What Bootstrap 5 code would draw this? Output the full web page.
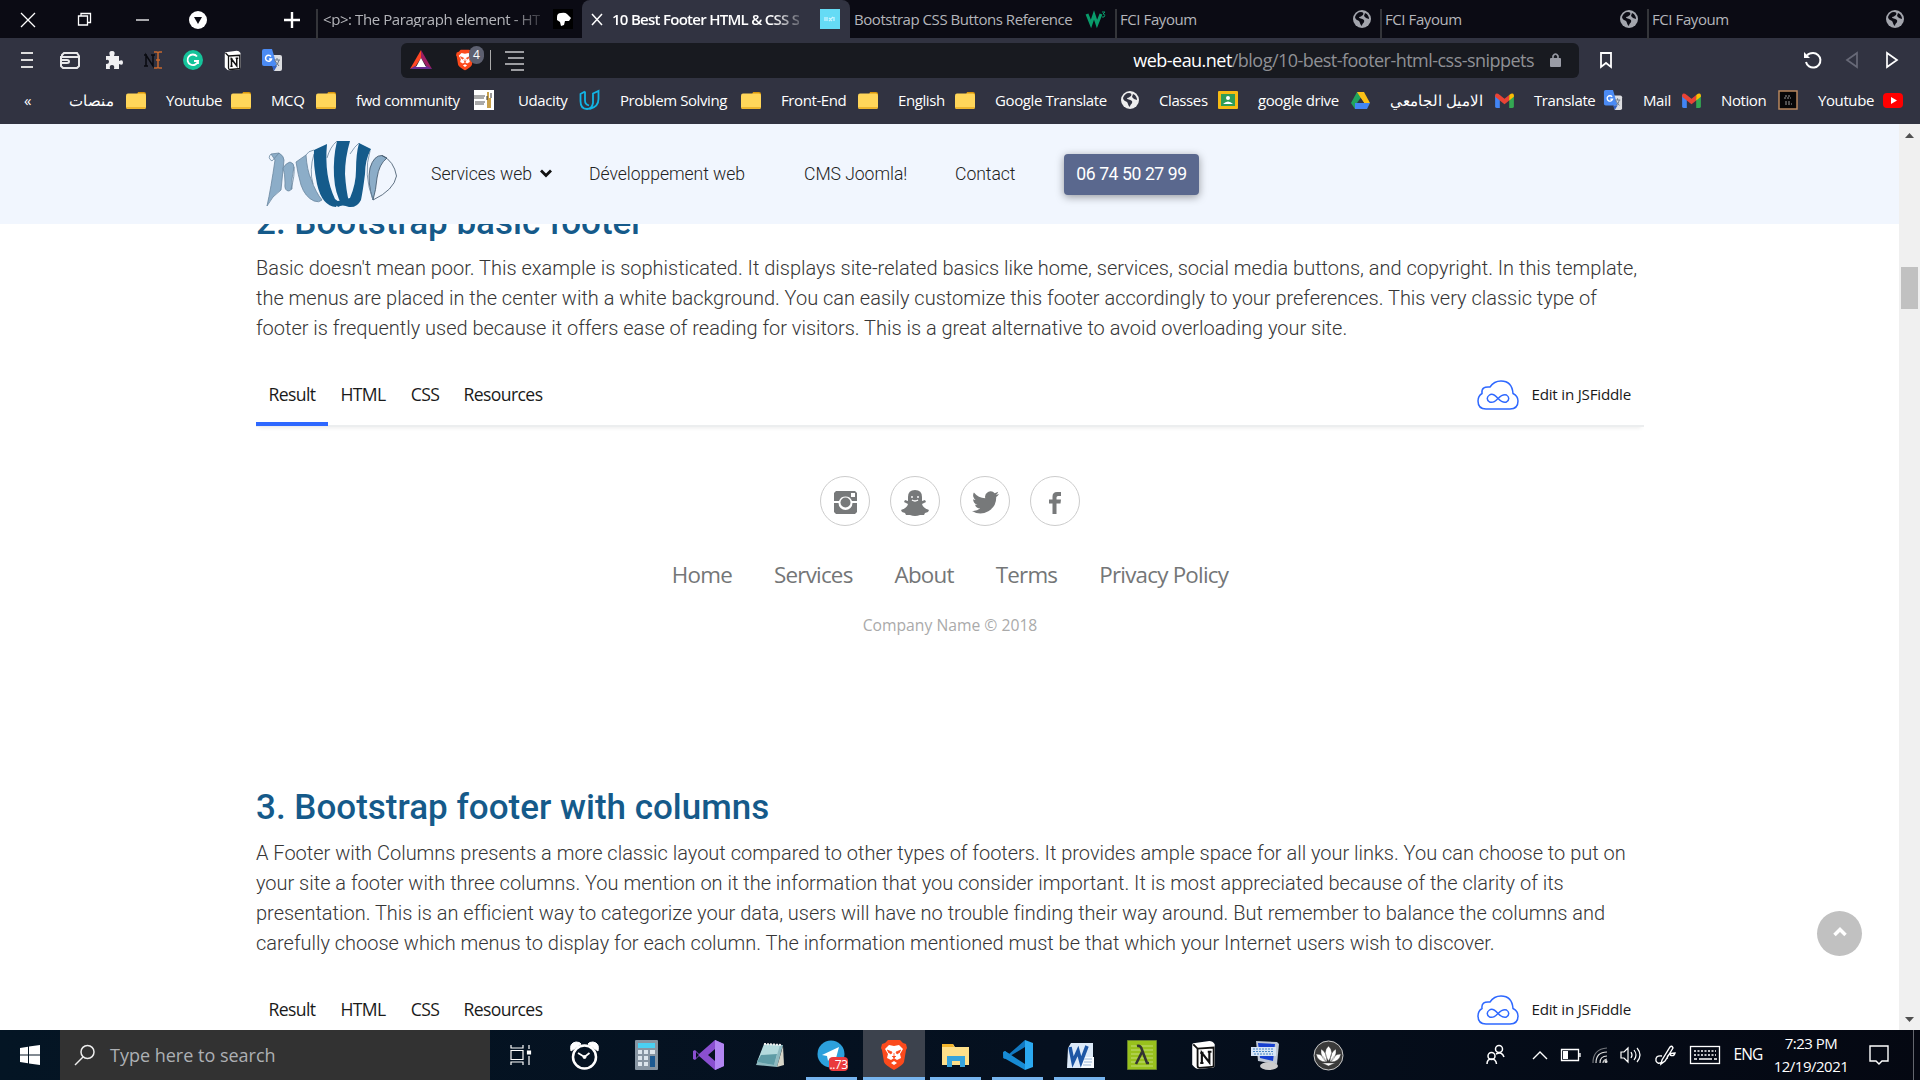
<!DOCTYPE html>
<html lang="en">
<head>
<meta charset="utf-8">
<title>10 Best Footer HTML &amp; CSS Snippets</title>
<link href="https://cdn.jsdelivr.net/npm/bootstrap@5.3.0/dist/css/bootstrap.min.css" rel="stylesheet">
<style>
body{width:1920px;height:1080px;overflow:hidden;font-family:"Open Sans","Noto Sans",sans-serif;background:#fff;line-height:1}
svg{display:block;flex:none;overflow:visible}
.ui{white-space:nowrap}
/* browser chrome */
.tabstrip{height:38px;background:#0b0b14;display:grid;grid-template-columns:56px 56px 60px 52px 92px 266px 268px 265px 265px 267px 1fr;color:#b4b5ba;font-size:15px;letter-spacing:-.42px}
.tabstrip>div{display:flex;align-items:center}
.tab-item{border-left:2px solid #34353a;margin-top:9px;padding:0 9px 10px 3px;justify-content:space-between}
.tab-item:nth-child(6){padding-left:5px}
.tab-live{background:#313341;border-radius:8px 8px 0 0;color:#fff;font-weight:600;padding:0 10px 1px 10px;letter-spacing:-.72px}
.tab-title{margin-left:10px}
.tabstrip>.no-edge{border-color:transparent;padding-left:2px;letter-spacing:-.45px}
.fade-text{-webkit-mask-image:linear-gradient(90deg,#000 86%,rgba(0,0,0,.25));mask-image:linear-gradient(90deg,#000 86%,rgba(0,0,0,.25))}
.tab-globe{--hole:#0b0b14;color:#a3a5ad}
.book-globe{--hole:#313341;color:#eee}
.toolrow{height:44px;background:#313341;display:grid;grid-template-columns:49px 41px 43px 40px 40px 40px 148px 1178px 54px 1fr 40px 40px 48px;align-items:center}
.toolrow>div{display:flex;justify-content:center}
.toolrow .omni{height:35px;background:#181a20;border-radius:6px;display:flex;align-items:center;justify-content:flex-start;padding:0 18px 0 9px;color:#fff;font-size:18px;letter-spacing:-.53px}
.omni .dim{color:#8f9095}
.omni-lock{margin-left:16px}
.shield-count{left:13px;top:-3px;width:15px;height:18px;border-radius:8px;background:#5d6070;color:#fff;font-size:12px;letter-spacing:0;display:flex;align-items:center;justify-content:center}
.bookrow{height:42px;background:#313341;color:#fff;font-size:15px;letter-spacing:-.4px;display:grid;grid-template-columns:69px 77px 105px 85px 158px 106px 161px 117px 97px 164px 99px 132px 144px 109px 78px 97px 105px 1fr;padding-bottom:6px}
.bookrow>a{color:inherit;text-decoration:none;display:flex;align-items:center;justify-content:space-between}
.bookrow>a:not(:first-child){padding-left:20px}
.bookrow>a:nth-child(2){padding-left:0}
.bookrow>a:nth-child(6){padding-left:24px}
/* site */
.viewport-box{height:906px;overflow:hidden}
.site{width:1899px;height:906px;overflow:hidden;font-family:Roboto,sans-serif}
.site-nav{height:100px;background:#f1f6fe;padding-left:266px;font-size:17.6px;letter-spacing:-.05px;font-weight:300;color:#222;display:grid;grid-template-columns:165px 158px 215px 151px 109px 135px;align-items:center}
.site-nav>span{padding-top:1px}
.call-btn{height:41px;background:#5a688e;color:#fff;border:0;border-radius:4px;font-size:17.6px;font-weight:400;letter-spacing:-.42px;box-shadow:0 2px 8px rgba(0,0,0,.38);padding:1px 0 0}
.article{width:1388px;margin-left:256px}
.article h2{font-size:35px;font-weight:500;color:#155a8a;line-height:42px;margin:0 0 9px}
.clip-head{height:29px;overflow:hidden;display:flex;align-items:flex-end}
.article p{font-size:20px;font-weight:300;line-height:30px;color:#363636;margin:0;white-space:nowrap;letter-spacing:-.01px}
.fiddle-bar{height:64px;margin-top:20px;font-family:"Open Sans",sans-serif;font-size:17.6px;letter-spacing:-.62px;color:#1a1a1a;border-bottom:2px solid #eceeef;box-shadow:0 4px 4px -3px rgba(0,0,0,.08);display:grid;grid-template-columns:72px 70px 54px 102px 1fr auto}
.fiddle-bar>div{display:flex;align-items:center;justify-content:center;padding-top:2px}
.fiddle-bar>.sel{border-bottom:4px solid #2e68ff;margin-bottom:-1px;padding-top:5px}
.fiddle-bar>.fiddle-edit{font-size:15.2px;padding-right:13px;letter-spacing:-.22px}
.demo-foot{height:360px;padding-top:49px}
.demo-soc{gap:20px;margin-bottom:38px}
.soc{width:50px;height:50px;border:1px solid #ccc;border-radius:50%;color:#77797a;padding-top:3px}
.foot-links{font-family:"Open Sans",sans-serif;font-size:22.4px;letter-spacing:-.78px;color:#747677;gap:42px;margin-bottom:32px}
.foot-copy{font-family:"Open Sans",sans-serif;font-size:15.7px;color:#aaa}
.sbar{width:21px;background:#f0f0f0}
.sbar-up{margin-top:9px}
.sthumb{width:17px;height:42px;background:#c1c1c1;margin-top:129px}
.to-top{left:1817px;top:787px;width:45px;height:45px;border-radius:50%;background:#c1c1c1}
/* taskbar */
.taskbar{height:50px;background:linear-gradient(90deg,#041524 0,#05101f 55%,#050812);color:#fff;display:grid;grid-template-columns:60px 431px repeat(14,62px) 1fr}
.taskbar>div{display:flex;align-items:center;justify-content:center}
.taskbar .find{background:#323232;color:#adb0b4;font-size:18px;justify-content:flex-start;padding-left:14px;gap:15px;margin-right:1px}
.taskbar .tview{padding-right:4px}
.taskbar .run{position:relative}
.run::after{content:"";position:absolute;left:5px;right:6px;bottom:0;height:3px;background:#76b4ee}
.taskbar .cur{background:#3c424d}
.taskbar .cur::after{left:0;right:0}
.taskbar .tray{display:grid;grid-template-columns:1fr 42px 20px 38px 22px 48px 32px 54px 72px 64px 9px;justify-items:center}
.tray .tray-people{justify-self:end;margin-right:15px}
.tray-peek{border-left:1px solid #63666e;height:50px;width:5px}
.eng{font-size:15.5px;letter-spacing:-.9px}
.clock{font-size:15px;letter-spacing:-.5px;line-height:23px;text-align:center;padding-bottom:1px}
</style>
</head>
<body>
<svg width="0" height="0" class="position-absolute">
<defs>
<symbol id="folder" viewBox="0 0 20 18"><path d="M12 1h6q2 0 2 2v3H10z" fill="#d9960a"/><rect y="2.5" width="20" height="15.5" rx="2" fill="#ffd65a"/><path d="M0 16h20q0 2-2 2H2q-2 0-2-2" fill="#eeb62e"/></symbol>
<symbol id="globe" viewBox="0 0 18 18"><circle cx="9" cy="9" r="9" fill="currentColor"/><path d="M8 2C10 2 11 3 10 5 8 6 8 7 6 7 6 9 9 8 11 10 12 13 9 13 9 16 7 15 7 12 6 11 4 10 2 9 2 7 3 4 5 2 8 2M12 3c3 1 4 4 4 6l-3-1-2-2z" fill="var(--hole)"/></symbol>
<symbol id="gmail" viewBox="0 0 20 16"><path d="M0 2v12q0 2 2 2h3V6z" fill="#4285f4"/><path d="M20 2v12q0 2-2 2h-3V6z" fill="#34a853"/><path d="M0 2Q1-1 5 2l5 4 5-4v6l-5 4-5-4-5-4z" fill="#ea4335"/><path d="M15 2q4-3 5 0v2l-5 4z" fill="#fbbc04"/></symbol>
<symbol id="gtrans" viewBox="0 0 20 22"><path d="M8 6h10q2 0 2 2v12q0 2-2 2h-6z" fill="#dcdde0"/><path d="M2 0h8l5 17H2q-2 0-2-2V2q0-2 2-2" fill="#4b8bf4"/><path d="M10 17h5l-3 5z" fill="#3160c4"/><path d="M9 7.500A3 3 0 1 0 9.500 10H7" fill="none" stroke="#fff" stroke-width="1.500"/><path d="M12 11h6M15 9v2M17 11q-1 5-4 6M13 12l4 5" stroke="#6b7785" fill="none"/></symbol>
<symbol id="notion" viewBox="0 0 24 28"><path d="M2 3 17 1q3 0 5 3v19q0 3-3 3L7 27Q4 27 1 23V6q0-3 1-3" fill="#fff"/><path d="m2 4 4 4 15-1v17q0 1-2 1L8 26q-2 0-2-2V8" fill="#fff" stroke="#111" stroke-width="1.700"/><path d="M10 21V12l7 9V11M8.500 12h3M8.500 21.500h3M15.500 11H19" fill="none" stroke="#111" stroke-width="2"/></symbol>
<symbol id="lion" viewBox="0 0 26 30"><path d="m7 0h12l3 3 3 1 1 4-1 2-2 12q-1 3-10 8Q4 25 3 22L1 10 0 8l1-4 3-1z" fill="#fb4a1c"/><path d="m13 6 5-1 4 4-3 5 1 4-4 2-3-2-3 2-4-2 1-4-3-5 4-4zm0 15 3 2-3 2-3-2z" fill="#fff"/><path d="m6 10 5 2-1 2-3-2m13-2-5 2 1 2 3-2M13 13v4m-2-1 2 2 2-2" fill="#fb4a1c" stroke="#fb4a1c" stroke-width=".8"/></symbol>
<symbol id="cloud" viewBox="0 0 42 30"><path d="M9 29Q1 29 1 21 1 16 5 13.500 4 6 13 7 17 1 24 1 35 1 36 13.500 41 16 41 21 41 29 33 29z" fill="none" stroke="#2e68ff" stroke-width="1.500"/><path d="M21 18.500C17 14 14 14 12.500 15c-3 2-3 5 0 7 4 1 6-1 8.500-3.500s5-4.500 8.500-3.500c3 2 3 5 0 7-3 1-5 0-8.500-3.500" fill="none" stroke="#2e68ff" stroke-width="1.500"/></symbol>
<symbol id="logo" viewBox="0 0 131 68"><g stroke="#6a879f" stroke-width=".8"><path d="M5 14 13 13q5 3 5 7L15 50Q6 56 1 66 5 48 9 20z" fill="#8cadc8"/><path d="M5 14q-4 4 1 7l7-8" fill="none"/><path d="M17 28q3-5 7-6 4 1 4 5-3 13-2 22l-3 2q-5 0-4-8 0-10-2-15" fill="#8cadc8"/><path d="M30 22 40 15q1 15 5 24 5 14 11 21-3 3-8 1-9-4-13-16-3-10-5-23z" fill="#8cadc8"/><path d="M28 27q1 8-3 22M40 15q2-4 8-5M47 44q-4-14 1-30" fill="none"/><path d="M107 60Q101 42 104 28 108 15 116 15.500L121 18Q113 24 111 38 110 50 107 60z" fill="#8cadc8" stroke="#3b5164"/><path d="M116 15.500Q128 21 130.500 36 128 50 107 60" fill="none" stroke="#3b5164"/></g><g fill="#155b8b"><path d="M48 10 61 4Q58 36 69 59L73 62 70 67Q56 66 51 44 47 24 48 10z"/><path d="M71 1 84 1Q79 18 79 34 80 50 83 62L76 65Q69 54 68 36 67 18 71 1z"/><path d="M93 3 105 9Q99 20 99 34 97 50 95 60 91 68 83 67 76 64 72 67L68 62 76 60 84 58Q90 44 90 30 90 14 93 3z"/></g><path d="M61 18Q64 7 71 1M84 14q5-8 9-11M104 11Q97 34 107 60" stroke="#6a879f" stroke-width=".8" fill="none"/></symbol>
</defs></svg>

<header class="ui">
<div class="tabstrip">
<div class="justify-content-center"><svg width="14" height="14" stroke="#fff" stroke-width="1.300"><path d="m0 0 14 14M14 0 0 14"/></svg></div>
<div class="justify-content-center"><svg width="13" height="13" fill="none" stroke="#fff" stroke-width="1.300"><path d="M.5 3h9v9h-9zM3 3V.5h9.500v9H10"/></svg></div>
<div class="justify-content-center"><svg width="13" height="2"><path d="M0 1h13" stroke="#fff" stroke-width="1.300"/></svg></div>
<div class="justify-content-center"><svg width="18" height="18"><circle cx="9" cy="9" r="9" fill="#fff"/><path d="M5 6h8l-4 7z" fill="#0b0b14"/></svg></div>
<div class="justify-content-end pe-3"><svg width="16" height="16" stroke="#fff" stroke-width="2.400"><path d="M8 0v16M0 8h16"/></svg></div>
<div class="tab-item"><span class="fade-text">&lt;p&gt;: The Paragraph element - HT</span><svg width="20" height="20"><path fill="#000" d="M0 0h20v20H0z"/><path d="M4 8q0-4 4-4 4-1 6 1l4 4-2 3h-4l-1 4-3 1-1-4-3-2z" fill="#fff"/></svg></div>
<div class="tab-live"><svg width="10" height="11" stroke="#fff" stroke-width="1.500"><path d="m0 0 10 11M10 0 0 11"/></svg><span class="fade-text tab-title">10 Best Footer HTML &amp; CSS S</span><svg class="ms-auto" width="20" height="20"><path d="M0 0h20v20H0z" fill="#65dbf5"/><path d="M5 8v4m2-4v4m2-3 3 3m-3 0 4-4m1 0v4" stroke="#c8f4ff" stroke-width="1.300"/></svg></div>
<div class="tab-item no-edge"><span>Bootstrap CSS Buttons Reference</span><svg width="20" height="16" fill="none" stroke="#099c6b"><path d="m1 3 4 10 3-9 3 9 4-10" stroke-width="3"/><path d="M16 1h3l-2 2q3 0 1 3h-2" stroke-width="1"/></svg></div>
<div class="tab-item"><span>FCI Fayoum</span><svg class="tab-globe" width="18" height="18"><use href="#globe"/></svg></div>
<div class="tab-item"><span>FCI Fayoum</span><svg class="tab-globe" width="18" height="18"><use href="#globe"/></svg></div>
<div class="tab-item pe-3"><span>FCI Fayoum</span><svg class="tab-globe" width="18" height="18"><use href="#globe"/></svg></div>
</div>
<div class="toolrow">
<div><svg class="ms-1" width="12" height="16" stroke="#ddd" stroke-width="1.800"><path d="M0 1h12M0 8h12M0 15h12"/></svg></div>
<div><svg width="20" height="17" fill="none" stroke="#e8e8ea" stroke-width="2"><path d="M2 5V3l2-2h13l2 3v10l-2 2H3l-2-2V5h18M1 8h6q2 0 2 1.500T7 11H1"/></svg></div>
<div class="ps-1"><svg width="18" height="18" fill="#f0f0f2"><path d="M1 5h4Q3 0 7 0t2 5h5v5q4-2 4 1.500T14 13v5H9q1-4-2-4t-2 4H1v-5q3 0 3-2.500T1 9z"/></svg></div>
<div><svg width="18" height="18" fill="none" stroke-width="1.500"><path d="M2 15V4l7 11V4M0 4h3M0 15h4M7 4h4" stroke="#090a0f"/><path d="M10 1h3l1 1 1-1h3M14 2v14M10 17h3l1-1 1 1h3M12 9h4" stroke="#c6682f"/></svg></div>
<div><svg width="20" height="20"><circle cx="10" cy="10" r="10" fill="#15c39a"/><path d="M14 6.500A5.300 5.300 0 1 0 15 11h-4m4-1v4" fill="none" stroke="#fff" stroke-width="1.800"/></svg></div>
<div><svg width="20" height="21"><use href="#notion"/></svg></div>
<div class="justify-content-start ps-2"><svg width="22" height="22"><use href="#gtrans"/></svg></div>
<div class="omni">
<svg width="22" height="20"><path d="M11 0 0 19l5-2 6-9z" fill="#ff4724"/><path d="m11 0 11 19-5-2-6-9z" fill="#9e1f63"/><path d="m0 19 5-3h12l5 3z" fill="#662d91"/><path d="m11 8 5 9H6z" fill="#fff"/></svg>
<span class="position-relative ms-4"><svg width="18" height="22" viewBox="0 0 26 30"><use href="#lion"/></svg><b class="shield-count position-absolute fw-normal">4</b></span>
<svg class="ms-3" width="41" height="20" fill="none"><path d="M.5 0v20" stroke="#aaa" /><path d="M15 2h19M18 8h16M15 14h19M21 20h13" stroke="#c8c9cc" stroke-width="1.500"/></svg>
<span class="ms-auto">web-eau.net<span class="dim">/blog/10-best-footer-html-css-snippets</span></span>
<svg class="omni-lock" width="11" height="14"><rect y="5" width="11" height="9" rx="1" fill="#9a9ca6"/><path d="M3 6V3q2.500-4 5 0v3" fill="none" stroke="#9a9ca6" stroke-width="1.600"/></svg>
</div>
<div><svg width="12" height="16" fill="none" stroke="#fff" stroke-width="1.800"><path d="M1 1h10v14l-5-4-5 4z"/></svg></div><div></div>
<div><svg width="17" height="17" fill="none" stroke="#fff" stroke-width="2"><path d="M3 3.500q2-2.500 6-2.500a7.300 7.300 0 1 1-7 9"/><path d="M0 0v6h6z" fill="#fff" stroke="none"/></svg></div>
<div><svg width="12" height="16" fill="none" stroke="#676977" stroke-width="1.700"><path d="M11 1v14L1 8z"/></svg></div>
<div class="pe-2"><svg width="12" height="16" fill="none" stroke="#fff" stroke-width="1.700"><path d="M1 1v14l10-7z"/></svg></div>
</div>
<nav class="bookrow">
<a class="ps-4"><span>«</span></a>
<a><span>منصات</span><svg width="20" height="18"><use href="#folder"/></svg></a>
<a><span>Youtube</span><svg width="20" height="18"><use href="#folder"/></svg></a>
<a><span>MCQ</span><svg width="20" height="18"><use href="#folder"/></svg></a>
<a><span>fwd community</span><svg width="20" height="20"><path fill="#fff" d="M0 0h20v20H0z"/><path d="M0 6h11M0 8h10M1 12h10M1 14h9" stroke="#555"/><path d="M14 2v16M16 8v10" stroke="#c8a04a" stroke-width="2"/><path d="M17 3v5M13 6v4" stroke="#333"/></svg></a>
<a><span>Udacity</span><svg width="21" height="20" fill="none" stroke="#12b5e5" stroke-width="1.800"><path d="M6 1.500 1.500 4v7q0 8 6.500 8 5 0 6-6V3.500L19.500 1v8q0 8-9 10M6 1.500v9q0 4 4 5"/></svg></a>
<a><span>Problem Solving</span><svg width="20" height="18"><use href="#folder"/></svg></a>
<a><span>Front-End</span><svg width="20" height="18"><use href="#folder"/></svg></a>
<a><span>English</span><svg width="20" height="18"><use href="#folder"/></svg></a>
<a><span>Google Translate</span><svg class="book-globe" width="18" height="18"><use href="#globe"/></svg></a>
<a><span>Classes</span><svg width="20" height="18"><rect width="20" height="18" rx="1" fill="#f6bb13"/><path fill="#2f9d58" d="M3 3h14v12H3z"/><circle cx="10" cy="7" r="2" fill="#fff"/><path d="M5 13q5-5 10 0z" fill="#fff"/></svg></a>
<a><span>google drive</span><svg width="19" height="17"><path d="M6 0h7L4 17 0 11z" fill="#21a45d"/><path d="M6 0h7l6 11h-6z" fill="#fbc117"/><path d="M4 11h15l-3 6H4z" fill="#4285f4"/><path d="M9.500 6 6 11h7z" fill="#313341"/></svg></a>
<a><span>الاميل الجامعي</span><svg width="19" height="15"><use href="#gmail"/></svg></a>
<a><span>Translate</span><svg width="20" height="20"><use href="#gtrans"/></svg></a>
<a><span>Mail</span><svg width="19" height="15"><use href="#gmail"/></svg></a>
<a><span>Notion</span><svg width="20" height="20"><path d="M1 1h18v18H1z" fill="#070707" stroke="#b9885d" stroke-width="1.500"/><path d="M7 6h5M6 8h7M7 12h6M7 14h7" stroke="#999" stroke-dasharray="2 1"/></svg></a>
<a><span>Youtube</span><svg width="20" height="15"><rect width="20" height="15" rx="4" fill="#f00"/><path d="m8 4 6 3.500L8 11z" fill="#fff"/></svg></a>
</nav>
</header>

<main class="viewport-box d-flex position-relative">
<div class="site">
<nav class="site-nav ui">
<svg width="131" height="68"><use href="#logo"/></svg>
<span class="d-flex align-items-center gap-2">Services web <svg width="13" height="9" fill="none" stroke="#111" stroke-width="2.800"><path d="m1 .5 5 5 5-5"/></svg></span>
<span>Développement web</span><span>CMS Joomla!</span><span>Contact</span>
<button class="call-btn">06 74 50 27 99</button>
</nav>
<article class="article">
<div class="clip-head"><h2>2. Bootstrap basic footer</h2></div>
<p>Basic doesn't mean poor. This example is sophisticated. It displays site-related basics like home, services, social media buttons, and copyright. In this template,<br>the menus are placed in the center with a white background. You can easily customize this footer accordingly to your preferences. This very classic type of<br>footer is frequently used because it offers ease of reading for visitors. This is a great alternative to avoid overloading your site.</p>
<div class="fiddle-bar ui"><div class="sel">Result</div><div>HTML</div><div>CSS</div><div>Resources</div><div></div><div class="fiddle-edit gap-2"><svg class="me-1" width="42" height="30"><use href="#cloud"/></svg>Edit in JSFiddle</div></div>
<div class="demo-foot">
<div class="d-flex justify-content-center demo-soc">
<div class="soc d-flex align-items-center justify-content-center"><svg width="23" height="23" fill="currentColor"><path d="M2 0h19l2 2v8h-5a7 7 0 0 0-13 0H0V2zM0 12h4.500a7 7 0 0 0 14 0H23v9l-2 2H2l-2-2z"/><circle cx="11.500" cy="11.500" r="5"/><path d="M17 2h4v4h-4z" fill="#fff"/></svg></div>
<div class="soc d-flex align-items-center justify-content-center"><svg width="28" height="26" fill="currentColor"><path d="M14 0q7 0 7 7v4l3-1 1 2-4 2q1 4 7 6l-1 2-3 1-1 2h-4q-5 2-10 0H5l-1-2-3-1-1-2q6-2 7-6l-4-2 1-2 3 1V7q0-7 7-7"/><path d="M11 6v2m6-2v2m-6 2q3 2 6 0" stroke="#fff" stroke-width="1.400" fill="none"/></svg></div>
<div class="soc d-flex align-items-center justify-content-center"><svg width="27" height="23" viewBox="0 0 24 20" fill="currentColor"><path d="M24 2.400a9 9 0 0 1-2.800.8A5 5 0 0 0 23.300.500a9 9 0 0 1-3.100 1.200 4.900 4.900 0 0 0-8.400 4.500A14 14 0 0 1 1.700 1 4.900 4.900 0 0 0 3.200 7.600 5 5 0 0 1 1 7v.1a4.900 4.900 0 0 0 3.900 4.800 5 5 0 0 1-2.200.1 4.900 4.900 0 0 0 4.600 3.400A10 10 0 0 1 0 17.500 14 14 0 0 0 21.500 5.100 10 10 0 0 0 24 2.400"/></svg></div>
<div class="soc d-flex align-items-center justify-content-center"><svg width="12" height="22" fill="currentColor"><path d="M3.500 22V11.500H0V7.500h3.500v-3Q3.500 0 8 0h4v4H9Q7.500 4 7.500 5.500v2H12l-.5 4h-4V22z"/></svg></div>
</div>
<div class="d-flex justify-content-center foot-links ui"><span>Home</span><span>Services</span><span>About</span><span>Terms</span><span>Privacy Policy</span></div>
<div class="text-center foot-copy ui">Company Name © 2018</div>
</div>
<h2 class="ui">3. Bootstrap footer with columns</h2>
<p>A Footer with Columns presents a more classic layout compared to other types of footers. It provides ample space for all your links. You can choose to put on<br>your site a footer with three columns. You mention on it the information that you consider important. It is most appreciated because of the clarity of its<br>presentation. This is an efficient way to categorize your data, users will have no trouble finding their way around. But remember to balance the columns and<br>carefully choose which menus to display for each column. The information mentioned must be that which your Internet users wish to discover.</p>
<div class="fiddle-bar ui"><div class="sel">Result</div><div>HTML</div><div>CSS</div><div>Resources</div><div></div><div class="fiddle-edit gap-2"><svg class="me-1" width="42" height="30"><use href="#cloud"/></svg>Edit in JSFiddle</div></div>
</article>
</div>
<div class="sbar d-flex flex-column align-items-center justify-content-between">
<div class="d-flex flex-column align-items-center"><svg class="sbar-up" width="9" height="5"><path d="M4.500 0 9 5H0z" fill="#505050"/></svg><div class="sthumb"></div></div>
<svg class="mb-2" width="9" height="5"><path d="M0 0h9L4.500 5z" fill="#505050"/></svg>
</div>
<a class="to-top position-absolute d-flex align-items-center justify-content-center"><svg class="mb-1" width="14" height="10" fill="none" stroke="#fff" stroke-width="3.500"><path d="m1.500 8 5.500-5.500L12.500 8"/></svg></a>
</main>

<footer class="taskbar ui">
<div><svg width="20" height="20" fill="#fff"><path d="m0 3 8-1.200v7.700H0zM9 1.600 20 0v9.500H9zM0 10.500h8v7.700L0 17zM9 10.500h11V20L9 18.400z"/></svg></div>
<div class="find"><svg width="21" height="21" fill="none" stroke="#eee" stroke-width="1.500"><circle cx="13.500" cy="7" r="6.500"/><path d="M9 12 1 20"/></svg>Type here to search</div>
<div class="tview"><svg width="21" height="20" fill="none" stroke="#fff" stroke-width="1.200"><path d="M1 0v3h12V0M1 5.500h12v9H1zM1 20v-3h12v3M19 0v4M19 11v9"/><path d="M17.500 6h3v3h-3z" fill="#fff"/></svg></div>
<div><svg width="29" height="29" fill="none" stroke="#fff"><circle cx="14.500" cy="16" r="11.500" stroke-width="2.500"/><path d="M1 10Q-1 2 6 1q4 0 5 2zM28 10q2-8-5-9-4 0-5 2z" fill="#fff"/><path d="m8 12 6.500 4 5-4" stroke-width="1.800"/><circle cx="14.500" cy="16" r="1.500" fill="#fff"/></svg></div>
<div><svg width="23" height="30"><rect width="23" height="30" rx="1" fill="#8795a2"/><path d="M3 3h17v5H3z" fill="#4bd0f2"/><path d="M3 10h4v4H3zm6 0h4v4H9zm6 0h5v4h-5zM3 16h4v4H3zm6 0h4v4H9zM3 22h4v4H3zm6 0h4v4H9z" fill="#dce5ec"/><path d="M15 16h5v11h-5z" fill="#1c5a92"/></svg></div>
<div><svg width="31" height="30"><path d="m22 0 9 4v22l-9 4L6 16l-4 4-2-1V11l2-1 4 4z" fill="#8a4fd0"/><path d="m22 0 9 4v22l-9 4z" fill="#b286f2"/><path d="M22 9v12l-7-6zM3 12v6l3-3z" fill="#05101f"/></svg></div>
<div><svg width="29" height="26"><path d="M9 2 27 3l-6 22L0 23z" fill="#8fbac0"/><path d="M8 2 24 3l-6 20L1 20z" fill="#b4dadd"/><path d="m5 13 16-1-3 11L1 20z" fill="#5f9ca6"/><path d="M8 2l18 1" stroke="#eee" stroke-width="2" stroke-dasharray="2 1"/><path d="m27 4-6 21 7-2z" fill="#d8d6c8"/></svg></div>
<div class="run"><svg width="31" height="30"><circle cx="14" cy="14" r="13.500" fill="#2ca0dc"/><path d="m5 15 17-8-4 15-5-4-2 3-1-5z" fill="#fff"/><rect x="12" y="17" width="19" height="14" rx="4" fill="#ea3a3d"/><text x="21.500" y="28.500" font-size="12" fill="#fff" text-anchor="middle" letter-spacing="-.5">..73</text></svg></div>
<div class="run cur"><svg width="26" height="30"><use href="#lion"/></svg></div>
<div class="run"><svg width="28" height="24"><path d="M0 1h11l2 3h14v18H0z" fill="#ffe08a"/><path d="M0 1h11l1 3H0z" fill="#f3b52c"/><path d="M5 24V13h18v11h-5v-6h-8v6z" fill="#37a4dc"/></svg></div>
<div class="run"><svg width="31" height="30"><path d="M22 0 6 14 2 11l-2 2v5l2 1L22 7z" fill="#1179c2"/><path d="m0 12 2-1 20 13v6L1 18z" fill="#178bd4"/><path d="m22 0 8 3v24l-8 3z" fill="#2ba9f1"/></svg></div>
<div class="run"><svg width="29" height="27"><path d="M5 1h22v25H1l1-20z" fill="#dce9f8"/><path d="M16 15h12v11H14z" fill="#f7fbff"/><path d="m4 5 3 15 5-11 3 11L21 4" fill="none" stroke="#1d56a5" stroke-width="3.600"/><path d="M18 17h8m-8 3h8m-9 3h8" stroke="#9ab6d8"/></svg></div>
<div><svg width="30" height="30"><path d="M.5.500h29v29H.5z" fill="#98c11d" stroke="#66822a"/><path d="M4 6h22M4 10h22M4 14h22M4 18h22M4 22h22M4 26h22" stroke="#b4d45a" stroke-width="1.500"/><path d="M10 6q4-1 5 4l5 13 2 0M15 12 9 24" stroke="#333" stroke-width="2.600" fill="none"/></svg></div>
<div><svg width="28" height="30" viewBox="0 0 24 28"><use href="#notion"/></svg></div>
<div><svg width="30" height="29"><path d="M5 0 26 1l2 2-2 20-19-3z" fill="#bfc7d4"/><path d="m7 2 17 1-2 17L9 17z" fill="#163fd0"/><path d="M0 6h25v9H0z" fill="#d7e4f5"/><path d="M2 8h21M2 10.500h21M3 13h19" stroke="#4886c4" stroke-dasharray="2 1"/><ellipse cx="18" cy="25" rx="9" ry="4" fill="#ccc"/></svg></div>
<div><svg width="31" height="31"><circle cx="15.500" cy="15.500" r="14.500" fill="#3a3a3a" stroke="#ccc"/><path d="M15.500 21Q9 12 15.500 6q6.500 6 0 15M14 22Q7 18 8 9q6 3 6 13M17 22q7-4 6-13-6 3-6 13M13 22Q5 22 3 14q8 0 10 8M18 22q8 0 10-8-8 0-10 8M9 23h13l-6.500 3z" fill="#fff" stroke="#3a3a3a" stroke-width=".4"/></svg></div>
<div class="tray">
<svg class="tray-people" width="18" height="20" fill="none" stroke="#fff" stroke-width="1.500"><circle cx="13" cy="4" r="3.500"/><circle cx="5.500" cy="11" r="3.500"/><path d="M1 19q0-5 4.500-5t5 5M10 9q6-3 8 3"/></svg>
<svg width="16" height="9" fill="none" stroke="#fff" stroke-width="1.400"><path d="m1 8 7-7 7 7"/></svg>
<svg width="20" height="12" fill="none" stroke="#fff"><path d="M.5.500h17v11H.5zM19 4v4" stroke-width="1.300"/><path d="M2 2h5v8H2z" fill="#fff" stroke="none"/></svg>
<svg width="16" height="16" fill="none" stroke="#ddd" stroke-width="1.200"><path d="M1 16Q1 2 15 1" opacity=".5"/><path d="M4 16Q4 5 15 5M8 16q0-7 7-7M11 16q0-3 4-4"/><circle cx="14" cy="14.500" r="1" fill="#fff"/></svg>
<svg width="21" height="18" fill="none" stroke="#fff" stroke-width="1.200"><path d="M1 6h3l4-4v14l-4-4H1zM11 6q2 3 0 6M14 4q4 5 0 10M17 2q6 7 0 14"/></svg>
<svg width="21" height="20" fill="none" stroke="#fff" stroke-width="1.400"><path d="m7 15 8-13q2-2 3 1l-8 13-4 3zM7 11q-7-1-6 5 2 4 6 1M12 14q0-6 8-6-1 4-5 2"/></svg>
<svg width="30" height="18" fill="none" stroke="#fff"><rect x=".5" y=".5" width="29" height="17" stroke-width="1.300"/><path d="M4 5h22M4 9h22" stroke-width="1.600" stroke-dasharray="2 1.500"/><path d="M4 13h3m2 0h13m2 0h3" stroke-width="1.500"/></svg>
<span class="eng">ENG</span>
<div class="clock">7:23 PM<br>12/19/2021</div>
<svg width="20" height="20" fill="none" stroke="#fff" stroke-width="1.400"><path d="M1 1h18v15h-6l-3 3-3-3H1z"/></svg>
<span class="tray-peek"></span>
</div>
</footer>
<script src="https://cdn.jsdelivr.net/npm/bootstrap@5.3.0/dist/js/bootstrap.bundle.min.js"></script>
</body>
</html>
